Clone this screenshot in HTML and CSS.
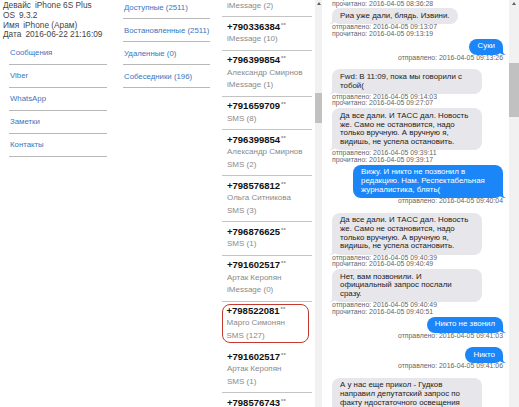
FILE: index.html
```html
<!DOCTYPE html>
<html lang="ru">
<head>
<meta charset="utf-8">
<title>Сообщения</title>
<link rel="stylesheet" href="styles.css">
</head>
<body>
<div class="page">
  <aside class="sidebar">
    <div class="info">
      <div><span class="lbl">Девайс</span>iPhone 6S Plus</div>
      <div><span class="lbl">OS</span>9.3.2</div>
      <div><span class="lbl">Имя</span>iPhone (Арам)</div>
      <div><span class="lbl">Дата</span>2016-06-22 21:16:09</div>
    </div>
    <ul class="nav nav-main">
      <li><a href="#">Сообщения</a></li>
      <li><a href="#">Viber</a></li>
      <li><a href="#">WhatsApp</a></li>
      <li><a href="#">Заметки</a></li>
      <li><a href="#">Контакты</a></li>
    </ul>
  </aside>

  <ul class="nav nav-sub">
    <li><a href="#">Доступные (2511)</a></li>
    <li><a href="#">Востановленные (2511)</a></li>
    <li><a href="#">Удаленные (0)</a></li>
    <li><a href="#">Собеседники (196)</a></li>
  </ul>

  <div class="contacts">
    <div class="contact-scroll">
      <ul class="contact-list">
        <li class="contact"><div class="num">+791234560<span class="stars">**</span></div><div class="sub">iMessage (2)</div></li>
        <li class="contact"><div class="num">+790336384<span class="stars">**</span></div><div class="sub">iMessage (10)</div></li>
        <li class="contact"><div class="num">+796399854<span class="stars">**</span></div><div class="sub">Александр Смирнов</div><div class="sub">iMessage (1)</div></li>
        <li class="contact"><div class="num">+791659709<span class="stars">**</span></div><div class="sub">SMS (8)</div></li>
        <li class="contact"><div class="num">+796399854<span class="stars">**</span></div><div class="sub">Александр Смирнов</div><div class="sub">SMS (2)</div></li>
        <li class="contact"><div class="num">+798576812<span class="stars">**</span></div><div class="sub">Ольга Ситникова</div><div class="sub">SMS (3)</div></li>
        <li class="contact"><div class="num">+796876625<span class="stars">**</span></div><div class="sub">SMS (1)</div></li>
        <li class="contact"><div class="num">+791602517<span class="stars">**</span></div><div class="sub">Артак Керопян</div><div class="sub">iMessage (0)</div></li>
        <li class="contact active"><div class="num">+798522081<span class="stars">**</span></div><div class="sub">Марго Симонян</div><div class="sub">SMS (127)</div></li>
        <li class="contact"><div class="num">+791602517<span class="stars">**</span></div><div class="sub">Артак Керопян</div><div class="sub">SMS (1)</div></li>
        <li class="contact"><div class="num">+798576743<span class="stars">**</span></div><div class="sub">SMS (4)</div></li>
      </ul>
    </div>
    <div class="scrollbar sb-list"><span class="arrow"></span><span class="thumb"></span></div>
  </div>

  <div class="chat">
    <div class="chat-scroll">
      <div class="msgs">
        <div class="msg in">
          <div class="meta"><div>отправлено: 2016-04-05 08:36:20</div><div>прочитано: 2016-04-05 08:36:28</div></div>
        </div>
        <div class="msg in">
          <div class="bubble">Риа уже дали, блядь. Извини.</div>
          <div class="meta"><div>отправлено: 2016-04-05 09:13:07</div><div>прочитано: 2016-04-05 09:13:19</div></div>
        </div>
        <div class="msg out">
          <div class="bubble">Суки</div>
          <div class="meta"><div>отправлено: 2016-04-05 09:13:26</div></div>
        </div>
        <div class="msg in">
          <div class="bubble">Fwd: В 11:09, пока мы говорили с тобой(</div>
          <div class="meta"><div>отправлено: 2016-04-05 09:14:03</div><div>прочитано: 2016-04-05 09:27:07</div></div>
        </div>
        <div class="msg in">
          <div class="bubble">Да все дали. И ТАСС дал. Новость же. Само не остановится, надо только вручную. А вручную я, видишь, не успела остановить.</div>
          <div class="meta"><div>отправлено: 2016-04-05 09:39:11</div><div>прочитано: 2016-04-05 09:39:17</div></div>
        </div>
        <div class="msg out">
          <div class="bubble">Вижу. И никто не позвонил в редакцию. Нам. Респектабельная журналистика, блять(</div>
          <div class="meta"><div>отправлено: 2016-04-05 09:40:04</div></div>
        </div>
        <div class="msg in">
          <div class="bubble">Да все дали. И ТАСС дал. Новость же. Само не остановится, надо только вручную. А вручную я, видишь, не успела остановить.</div>
          <div class="meta"><div>отправлено: 2016-04-05 09:40:39</div><div>прочитано: 2016-04-05 09:40:49</div></div>
        </div>
        <div class="msg in">
          <div class="bubble">Нет, вам позвонили. И официальный запрос послали сразу.</div>
          <div class="meta"><div>отправлено: 2016-04-05 09:40:49</div><div>прочитано: 2016-04-05 09:40:51</div></div>
        </div>
        <div class="msg out">
          <div class="bubble">Никто не звонил</div>
          <div class="meta"><div>отправлено: 2016-04-05 09:41:03</div></div>
        </div>
        <div class="msg out">
          <div class="bubble">Никто</div>
          <div class="meta"><div>отправлено: 2016-04-05 09:41:06</div></div>
        </div>
        <div class="msg in">
          <div class="bubble">А у нас еще прикол - Гудков направил депутатский запрос по факту ндостаточного освещения событий</div>
          <div class="meta"><div>отправлено: 2016-04-05 09:41:40</div><div>прочитано: 2016-04-05 09:41:52</div></div>
        </div>
      </div>
    </div>
    <div class="scrollbar sb-chat"><span class="arrow"></span><span class="thumb"></span></div>
  </div>
</div>
</body>
</html>
```

FILE: styles.css
```css
* {
  box-sizing: border-box;
  margin: 0;
  padding: 0;
}

html,
body {
  width: 519px;
  height: 407px;
  overflow: hidden;
  background: #fff;
}

body {
  font-family: "Liberation Sans", Arial, sans-serif;
  font-size: 8.5px;
  color: #333;
}

.page {
  display: flex;
  height: 407px;
}

/* left column */
.sidebar {
  width: 113px;
  flex: none;
}

.info {
  padding: 1px 0 0 3px;
  font-size: 8.3px;
  line-height: 9.8px;
  color: #444;
}

.lbl {
  margin-right: 4px;
}

.nav {
  list-style: none;
  font-size: 7.8px;
}

.nav li {
  padding: 6.5px 0 5.5px 1px;
  line-height: 10px;
  border-bottom: 1px solid #b8b8b8;
}

.nav a {
  color: #3a75bd;
  text-decoration: none;
}

.nav-main {
  margin: 1.5px 0 0 9px;
  width: 98px;
}

.nav-sub {
  flex: none;
  align-self: flex-start;
  width: 87px;
  margin: -4px 0 0 10px;
}

/* contacts */
.contacts {
  display: flex;
  flex: none;
  width: 100px;
  margin-left: 12px;
}

.contact-scroll {
  flex: 1;
  overflow: hidden;
}

.contact-list {
  list-style: none;
  margin-top: -16.5px;
}

.contact {
  padding: 3.75px 0 3.75px 5px;
  margin-right: 3px;
  border-bottom: 1px solid #c4c4c4;
  line-height: 12.5px;
}

.contact.active {
  border: 1.5px solid #c4392f;
  border-radius: 8px;
  margin: 2px 6px 4px 0;
  padding: 0 0 0 3.5px;
}

.num {
  font-size: 9.5px;
  font-weight: bold;
  color: #111;
}

.stars {
  font-size: 6px;
  font-weight: bold;
  color: #888;
  line-height: 0;
  vertical-align: 3px;
  margin-left: 1px;
}

.sub {
  font-size: 8px;
  color: #8a8a8a;
}

/* scrollbars */
.scrollbar {
  flex: none;
  display: flex;
  flex-direction: column;
  align-items: center;
  background: #f1f1f1;
}

.sb-list {
  width: 7px;
}

.sb-chat {
  width: 10px;
}

.arrow {
  margin-top: 2px;
  width: 0;
  height: 0;
  border-left: 2px solid transparent;
  border-right: 2px solid transparent;
  border-bottom: 3px solid #606060;
}

.thumb {
  width: 100%;
  background: #c1c1c1;
}

.sb-list .thumb {
  margin-top: 88px;
  height: 30px;
}

.sb-chat .thumb {
  margin-top: 58px;
  height: 54px;
}

/* chat */
.chat {
  display: flex;
  flex: 1;
}

.chat-scroll {
  flex: 1;
  overflow: hidden;
  padding: 0 6px 0 10px;
}

.msgs {
  display: flex;
  flex-direction: column;
  margin-top: -6px;
}

.msg {
  display: flex;
  flex-direction: column;
  align-items: flex-start;
  margin-bottom: 1.3px;
}

.msg.out {
  align-items: flex-end;
}

.bubble {
  position: relative;
  max-width: 150px;
  padding: 3.6px 8px;
  font-size: 7.9px;
  line-height: 8.7px;
  border-radius: 8px;
}

.in .bubble {
  background: #e6e6eb;
  color: #222;
}

.out .bubble {
  background: #1b86f7;
  color: #fff;
}

.bubble::before,
.bubble::after {
  content: "";
  position: absolute;
  bottom: 0;
  width: 8px;
  height: 8px;
}

.in .bubble::before {
  left: -3px;
  background: #e6e6eb;
  border-bottom-right-radius: 7px 6px;
}

.in .bubble::after {
  left: -8px;
  background: #fff;
  border-bottom-right-radius: 4px;
}

.out .bubble::before {
  right: -3px;
  background: #1b86f7;
  border-bottom-left-radius: 7px 6px;
}

.out .bubble::after {
  right: -8px;
  background: #fff;
  border-bottom-left-radius: 4px;
}

.meta {
  font-size: 6.9px;
  line-height: 6.6px;
  color: #666;
  white-space: nowrap;
}

.out .meta {
  min-height: 13.2px;
  text-align: right;
}
```
